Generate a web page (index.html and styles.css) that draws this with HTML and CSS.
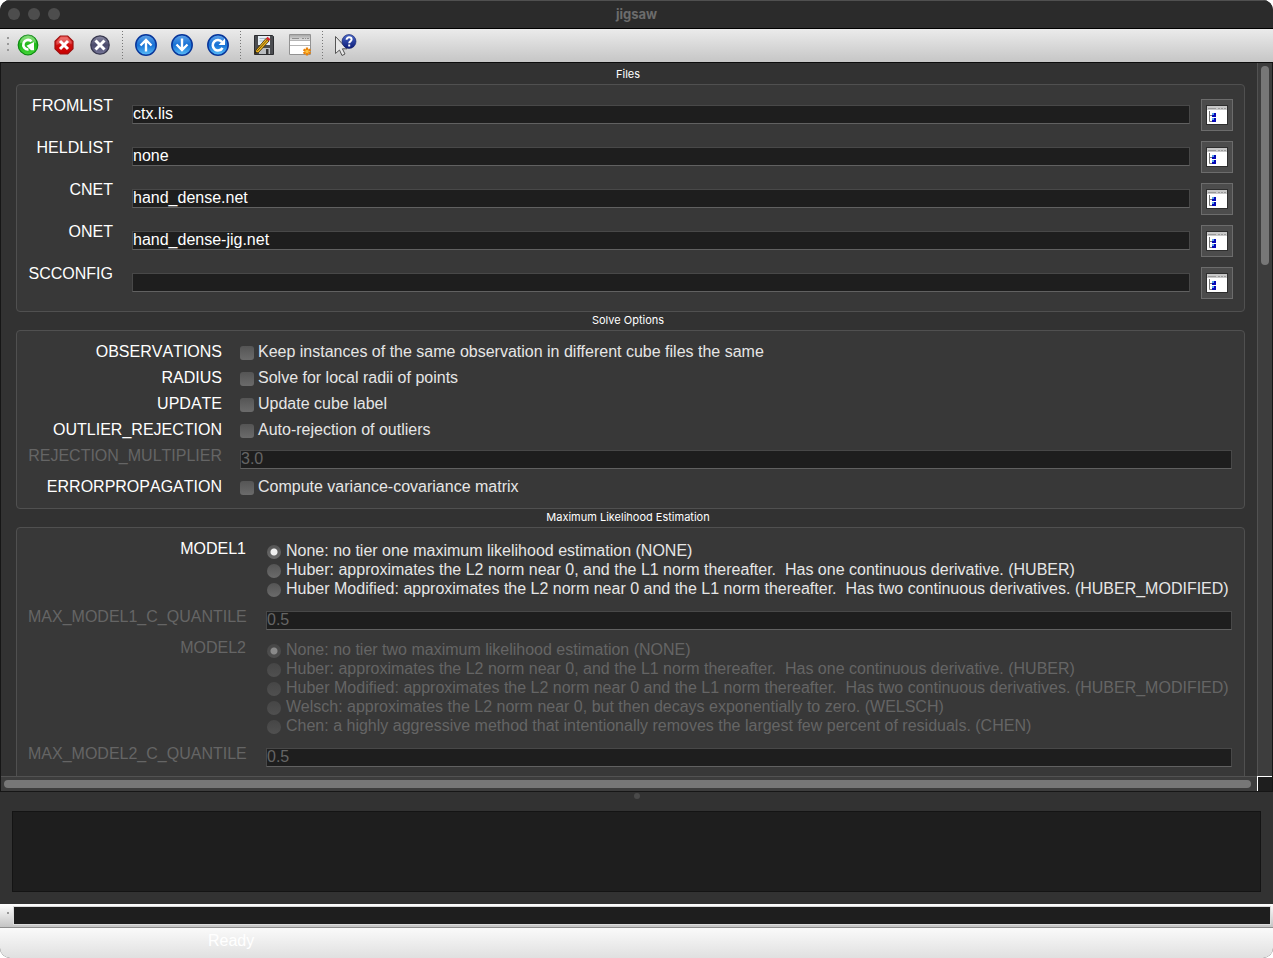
FILE: index.html
```html
<!DOCTYPE html>
<html lang="en">
<head>
<meta charset="utf-8">
<title>jigsaw</title>
<link rel="stylesheet" href="styles.css">
</head>
<body>
<div class="window">
  <header class="titlebar">
    <div class="lights"><span></span><span></span><span></span></div>
    <h1>jigsaw</h1>
  </header>

  <svg class="defs" aria-hidden="true">
    <defs>
      <linearGradient id="green" x1="0" y1="0" x2="0" y2="1"><stop offset="0" stop-color="#5fd84a"/><stop offset=".5" stop-color="#1fb81a"/><stop offset="1" stop-color="#45d63a"/></linearGradient>
      <linearGradient id="red" x1="0" y1="0" x2="0" y2="1"><stop offset="0" stop-color="#f0605c"/><stop offset=".5" stop-color="#d00d0d"/><stop offset="1" stop-color="#c80000"/></linearGradient>
      <linearGradient id="slate" x1="0" y1="0" x2="0" y2="1"><stop offset="0" stop-color="#8d8da6"/><stop offset=".5" stop-color="#4b4b6c"/><stop offset="1" stop-color="#77779a"/></linearGradient>
      <linearGradient id="blue" x1="0" y1="0" x2="0" y2="1"><stop offset="0" stop-color="#5fa4ea"/><stop offset=".5" stop-color="#1670d4"/><stop offset="1" stop-color="#5cc0fa"/></linearGradient>
      <linearGradient id="navy" x1="0" y1="0" x2="0" y2="1"><stop offset="0" stop-color="#4a68c8"/><stop offset="1" stop-color="#0c1c78"/></linearGradient>
      <linearGradient id="metal" x1="0" y1="0" x2="0" y2="1"><stop offset="0" stop-color="#a8a8a8"/><stop offset="1" stop-color="#dedede"/></linearGradient>
      <symbol id="picker" viewBox="0 0 22 20">
        <rect width="22" height="20" fill="#2e2e2e"/>
        <rect x="1" y="1" width="20" height="18" fill="#fff"/>
        <rect x="1" y="1" width="20" height="4" fill="#c8c8c8"/>
        <path d="M2 3.500h8M12 3.500h2M15 3.500h2M18 3.500h2" stroke="#999"/>
        <path d="M3.500 6v10.500H7M3.500 10.500H7" fill="none" stroke="#777"/>
        <path d="M6 8h4v4H6zM6 13h4v4H6z" fill="#0508b8"/>
        <path d="M6 8h2v2H6zM6 13h2v2H6z" fill="#5aa8e8"/>
      </symbol>
    </defs>
  </svg>

  <nav class="toolbar" aria-label="Main toolbar">
    <span class="grip"></span>
    <button type="button" aria-label="Run">
      <svg viewBox="0 0 24 24"><circle cx="12" cy="12" r="9.800" fill="url(#green)" stroke="#0c8a10" stroke-width="1.200"/><path d="M4 10a8 8 0 0 1 16 0q-8-3-16 0" fill="#fff" opacity=".25"/><path d="M15.500 8.300A4.800 4.800 0 1 0 12.500 16.500" fill="none" stroke="#fff" stroke-width="2.600"/><path d="M18 9v8.200h-3l-4.500-4.500z" fill="#fff"/></svg>
    </button>
    <button type="button" aria-label="Stop">
      <svg viewBox="0 0 24 24"><path d="M8.300 3h7.400L21 8.300v7.400L15.700 21H8.300L3 15.700V8.300z" fill="url(#red)" stroke="#9d1010" stroke-width="1.200"/><path d="M4.500 9 9 4.500h6L19.500 9v2q-8-3-15 1z" fill="#fff" opacity=".2"/><path d="m8 8 8 8m0-8-8 8" stroke="#fff" stroke-width="3"/></svg>
    </button>
    <button type="button" aria-label="Exit">
      <svg viewBox="0 0 24 24"><circle cx="12" cy="12" r="9.200" fill="url(#slate)" stroke="#38384f" stroke-width="1.300"/><path d="m7.500 7.500 9 9m0-9-9 9" stroke="#fff" stroke-width="3"/></svg>
    </button>
    <span class="divider"></span>
    <button type="button" aria-label="Previous">
      <svg viewBox="0 0 24 24"><circle cx="12" cy="12" r="10.200" fill="url(#blue)" stroke="#08369a" stroke-width="1.500"/><path d="M12 18.500V7M6.500 12.500 12 7l5.500 5.500" fill="none" stroke="#fff" stroke-width="2.400"/></svg>
    </button>
    <button type="button" aria-label="Next">
      <svg viewBox="0 0 24 24"><circle cx="12" cy="12" r="10.200" fill="url(#blue)" stroke="#08369a" stroke-width="1.500"/><path d="M12 5.500V17M6.500 11.500 12 17l5.500-5.500" fill="none" stroke="#fff" stroke-width="2.400"/></svg>
    </button>
    <button type="button" aria-label="Reset">
      <svg viewBox="0 0 24 24"><circle cx="12" cy="12" r="10.200" fill="url(#blue)" stroke="#08369a" stroke-width="1.500"/><path d="M16 9a5.200 5.200 0 1 0 .5 5.800" fill="none" stroke="#fff" stroke-width="2.600"/><path d="M19 5.500V12h-6.500z" fill="#fff"/></svg>
    </button>
    <span class="divider"></span>
    <button type="button" aria-label="Save log">
      <svg viewBox="0 0 24 24"><path d="M2.500 2.500h18l1 1v18h-19z" fill="#4a4c50" stroke="#2c2d30"/><path d="M6 3h12v9H6z" fill="#e6eef4"/><path d="M7.500 5.500h8M7.500 8h7" stroke="#a9bac8"/><path d="M7 15h11v6H7z" fill="#b9bcbf"/><path d="M14 16h2.500v5H14z" fill="#333"/><path d="M2.500 20.500 4 17 14 5.500l3 2.500L6.500 19.500z" fill="#efb51e" stroke="#33260a" stroke-width=".8"/><path d="m5 18.200 10.500-11.500" stroke="#4c3a08" stroke-width=".8"/><path d="m14 5.500 1.500-1.800 3 2.500L17 8z" fill="#d8232b"/><path d="m2.500 20.500.8-2.500 1.800 1.700z" fill="#222"/></svg>
    </button>
    <button type="button" aria-label="Clear log">
      <svg viewBox="0 0 24 24"><path d="M1.500 1.500h21v20h-21z" fill="#fff" stroke="#929292"/><path d="M2 2h20v5H2z" fill="url(#metal)"/><path d="M4 5.500h7M14 5.500h2M17 5.500h1M19 5.500h2" stroke="#8f8f8f"/><path d="M2 7.500h20M2 12.500h20" stroke="#b5b5b5"/><path d="M19 14.500v8M15.500 16.500l7 4M22.500 16.500l-7 4" stroke="#e98209" stroke-width="2.400"/><circle cx="19" cy="18.500" r="1.800" fill="#ffc03a"/></svg>
    </button>
    <span class="divider"></span>
    <button type="button" aria-label="What's this?">
      <svg viewBox="0 0 24 24"><path d="M1.500 3.500v17l4-3.500 2.500 5.500 3-1.500-2.600-5.200H13z" fill="#e8e8e8" stroke="#555"/><circle cx="15" cy="8.500" r="7" fill="url(#navy)" stroke="#122068" stroke-width=".6"/><path d="M12.600 6.700c0-3.200 5-3 5-.1 0 1.800-2.400 1.800-2.400 3.600M15.200 11.400v2.200" fill="none" stroke="#fff" stroke-width="2"/></svg>
    </button>
  </nav>

  <main class="scroll-area">
    <div class="content">
      <h2 class="first">Files</h2>
      <section class="group files">
        <label for="fromlist">FROMLIST</label><input type="text" id="fromlist" value="ctx.lis"><button type="button" aria-label="Browse FROMLIST"><svg><use href="#picker"/></svg></button>
        <label for="heldlist">HELDLIST</label><input type="text" id="heldlist" value="none"><button type="button" aria-label="Browse HELDLIST"><svg><use href="#picker"/></svg></button>
        <label for="cnet">CNET</label><input type="text" id="cnet" value="hand_dense.net"><button type="button" aria-label="Browse CNET"><svg><use href="#picker"/></svg></button>
        <label for="onet">ONET</label><input type="text" id="onet" value="hand_dense-jig.net"><button type="button" aria-label="Browse ONET"><svg><use href="#picker"/></svg></button>
        <label for="scconfig">SCCONFIG</label><input type="text" id="scconfig"><button type="button" aria-label="Browse SCCONFIG"><svg><use href="#picker"/></svg></button>
      </section>

      <h2>Solve Options</h2>
      <section class="group solve">
        <span class="name">OBSERVATIONS</span><label class="check"><input type="checkbox">Keep instances of the same observation in different cube files the same</label>
        <span class="name">RADIUS</span><label class="check"><input type="checkbox">Solve for local radii of points</label>
        <span class="name">UPDATE</span><label class="check"><input type="checkbox">Update cube label</label>
        <span class="name">OUTLIER_REJECTION</span><label class="check"><input type="checkbox">Auto-rejection of outliers</label>
        <label class="name off" for="rejmult">REJECTION_MULTIPLIER</label><input type="text" id="rejmult" value="3.0" disabled>
        <span class="name">ERRORPROPAGATION</span><label class="check"><input type="checkbox">Compute variance-covariance matrix</label>
      </section>

      <h2>Maximum Likelihood Estimation</h2>
      <section class="group mle">
        <span class="name">MODEL1</span>
        <div class="options">
          <label><input type="radio" name="model1" checked>None: no tier one maximum likelihood estimation (NONE)</label>
          <label><input type="radio" name="model1">Huber: approximates the L2 norm near 0, and the L1 norm thereafter.  Has one continuous derivative. (HUBER)</label>
          <label><input type="radio" name="model1">Huber Modified: approximates the L2 norm near 0 and the L1 norm thereafter.  Has two continuous derivatives. (HUBER_MODIFIED)</label>
        </div>
        <label class="name off" for="quant1">MAX_MODEL1_C_QUANTILE</label><input type="text" id="quant1" value="0.5" disabled>
        <span class="name off">MODEL2</span>
        <div class="options off">
          <label><input type="radio" name="model2" checked disabled>None: no tier two maximum likelihood estimation (NONE)</label>
          <label><input type="radio" name="model2" disabled>Huber: approximates the L2 norm near 0, and the L1 norm thereafter.  Has one continuous derivative. (HUBER)</label>
          <label><input type="radio" name="model2" disabled>Huber Modified: approximates the L2 norm near 0 and the L1 norm thereafter.  Has two continuous derivatives. (HUBER_MODIFIED)</label>
          <label><input type="radio" name="model2" disabled>Welsch: approximates the L2 norm near 0, but then decays exponentially to zero. (WELSCH)</label>
          <label><input type="radio" name="model2" disabled>Chen: a highly aggressive method that intentionally removes the largest few percent of residuals. (CHEN)</label>
        </div>
        <label class="name off" for="quant2">MAX_MODEL2_C_QUANTILE</label><input type="text" id="quant2" value="0.5" disabled>
      </section>
    </div>
    <div class="vbar"><span></span></div>
    <div class="hbar"><span></span></div>
    <div class="corner"></div>
  </main>

  <div class="splitter"><span></span></div>
  <section class="console" aria-label="Log"></section>
  <div class="progress"><span class="grip"></span><div class="track"></div></div>
  <footer class="status">Ready</footer>
</div>
</body>
</html>
```
FILE: styles.css
```css
* {
  box-sizing: border-box;
}

body {
  margin: 0;
  background: #fff;
  color: #fff;
  font: 16px/18px "Liberation Sans", Arial, sans-serif;
}

.window {
  display: flex;
  flex-direction: column;
  height: 100vh;
  overflow: hidden;
  border-radius: 10px;
  background: #323232;
}

.defs {
  position: absolute;
  width: 0;
  height: 0;
}

.titlebar {
  display: grid;
  grid-template-columns: 1fr auto 1fr;
  align-items: center;
  height: 29px;
  padding: 0 8px 1px;
  background: #2b2b2b;
  border-top: 1px solid #505050;
  border-bottom: 1px solid #000;
}

.lights {
  display: flex;
  gap: 8px;
}

.lights span {
  width: 12px;
  height: 12px;
  border-radius: 50%;
  background: #4d4d4d;
}

.titlebar h1 {
  margin: 0;
  color: #6c6c6c;
  font: bold 13px/16px Inter, sans-serif;
}

.toolbar {
  display: flex;
  align-items: center;
  height: 34px;
  padding: 0 0 2px 7px;
  background: linear-gradient(#ebebeb, #c6c6c6);
  border-bottom: 1px solid #0c0c0c;
}

.grip {
  width: 2px;
  height: 16px;
  margin-right: 1px;
  background: repeating-linear-gradient(#999 0 2px, transparent 2px 6px);
}

.toolbar button {
  display: grid;
  place-items: center;
  width: 36px;
  height: 30px;
  padding: 0;
  border: 0;
  background: none;
}

.toolbar svg {
  width: 24px;
  height: 24px;
}

.divider {
  width: 1px;
  height: 28px;
  margin: 0 5px 0 4px;
  background: repeating-linear-gradient(#777 0 1px, transparent 1px 3px);
}

.scroll-area {
  display: grid;
  grid-template: minmax(0, 1fr) 15px / minmax(0, 1fr) 15px;
  flex: 1;
  min-height: 0;
  border: 1px solid #161616;
  border-top: 0;
}

.content {
  display: flex;
  flex-direction: column;
  min-height: 0;
  padding: 0 12px 0 15px;
  overflow: hidden;
}

h2 {
  flex: none;
  margin: 0;
  padding: 0 5px 1px 0;
  font: 11px/17px Inter, sans-serif;
  text-align: center;
}

h2.first {
  padding-top: 3px;
}

.group {
  display: grid;
  flex: none;
  row-gap: 8px;
  padding: 11px 12px 12px 11px;
  background: #383838;
  border: 1px solid #505050;
  border-radius: 4px;
  font-kerning: none;
}

.files {
  grid-template-columns: 85px minmax(0, 1fr) 32px;
  row-gap: 7px;
  padding-right: 11px;
}

.files > label,
.name {
  text-align: right;
}

.files > label,
.mle .name {
  padding-top: 1px;
}

.solve {
  grid-template-columns: 194px minmax(0, 1fr);
  column-gap: 18px;
  padding-top: 12px;
}

.mle {
  grid-template-columns: 218px minmax(0, 1fr);
  column-gap: 20px;
  padding-bottom: 40px;
}

.off,
input[type="text"]:disabled {
  color: #656565;
}

input[type="text"] {
  width: 100%;
  height: 19px;
  margin: 4px 0 0;
  padding: 0 0 2px;
  background: #1e1e1e;
  border: 1px solid #484848;
  border-bottom-color: #616161;
  border-radius: 0;
  color: #fff;
  font: inherit;
}

.files input[type="text"] {
  width: auto;
  margin: 9px 11px 0 19px;
}

.solve input[type="text"] {
  margin: 3px 0 1px;
}

.files button {
  display: grid;
  place-items: center;
  width: 32px;
  height: 32px;
  margin-top: 3px;
  padding: 0;
  background: #4c4c4c;
  border: 1px solid #6c6c6c;
}

.files button svg {
  width: 22px;
  height: 20px;
}

.check,
.options label {
  display: flex;
  align-items: center;
  color: #e6e6e6;
  font-kerning: auto;
  white-space: pre;
}

.options {
  padding: 2px 0 1px;
}

.options label {
  line-height: 19px;
}

.options.off label {
  color: #656565;
}

input[type="checkbox"],
input[type="radio"] {
  appearance: none;
  width: 14px;
  height: 14px;
  margin: 2px 4px 0 0;
  background: linear-gradient(#555, #6b6b6b);
  border-radius: 3px;
}

input[type="radio"] {
  margin: 2px 5px 0 1px;
  border-radius: 50%;
}

input[type="radio"]:checked {
  background: radial-gradient(circle, #f0f0f0 0 3px, transparent 4px), linear-gradient(#555, #6b6b6b);
}

input[type="radio"]:disabled {
  background: linear-gradient(#464646, #505050);
}

input[type="radio"]:checked:disabled {
  background: radial-gradient(circle, #8a8a8a 0 3px, transparent 4px), linear-gradient(#464646, #505050);
}

.vbar,
.hbar {
  background: #3d3d3d;
}

.vbar {
  padding: 3px 3px 0;
  border-left: 1px solid #525252;
}

.vbar span {
  display: block;
  width: 8px;
  height: 28%;
  border-radius: 4px;
  background: #777;
}

.hbar {
  padding: 3px 6px 3px 3px;
  border-top: 1px solid #525252;
}

.hbar span {
  display: block;
  height: 8px;
  border-radius: 4px;
  background: #777;
}

.corner {
  background: #1e1e1e;
  border: solid #fff;
  border-width: 1px 0 0 1px;
}

.splitter {
  display: flex;
  justify-content: center;
  height: 19px;
  padding-top: 1px;
}

.splitter span {
  width: 6px;
  height: 6px;
  border-radius: 50%;
  background: #4a4a4a;
}

.console {
  height: 81px;
  margin: 0 12px 12px;
  background: #1e1e1e;
  border: 1px solid #141414;
}

.progress {
  display: flex;
  height: 24px;
  padding: 2px 2px 2px 7px;
  background: linear-gradient(#fff, #c4c4c4);
  border-bottom: 1px solid #8e8e8e;
}

.progress .grip {
  height: 2px;
  margin: 6px 4px 0 0;
}

.track {
  flex: 1;
  background: #1e1e1e;
  border: 1px solid #dcdcdc;
}

.status {
  height: 30px;
  padding: 4px 208px;
  background: linear-gradient(#fafafa, #e0e0e0);
}
```
